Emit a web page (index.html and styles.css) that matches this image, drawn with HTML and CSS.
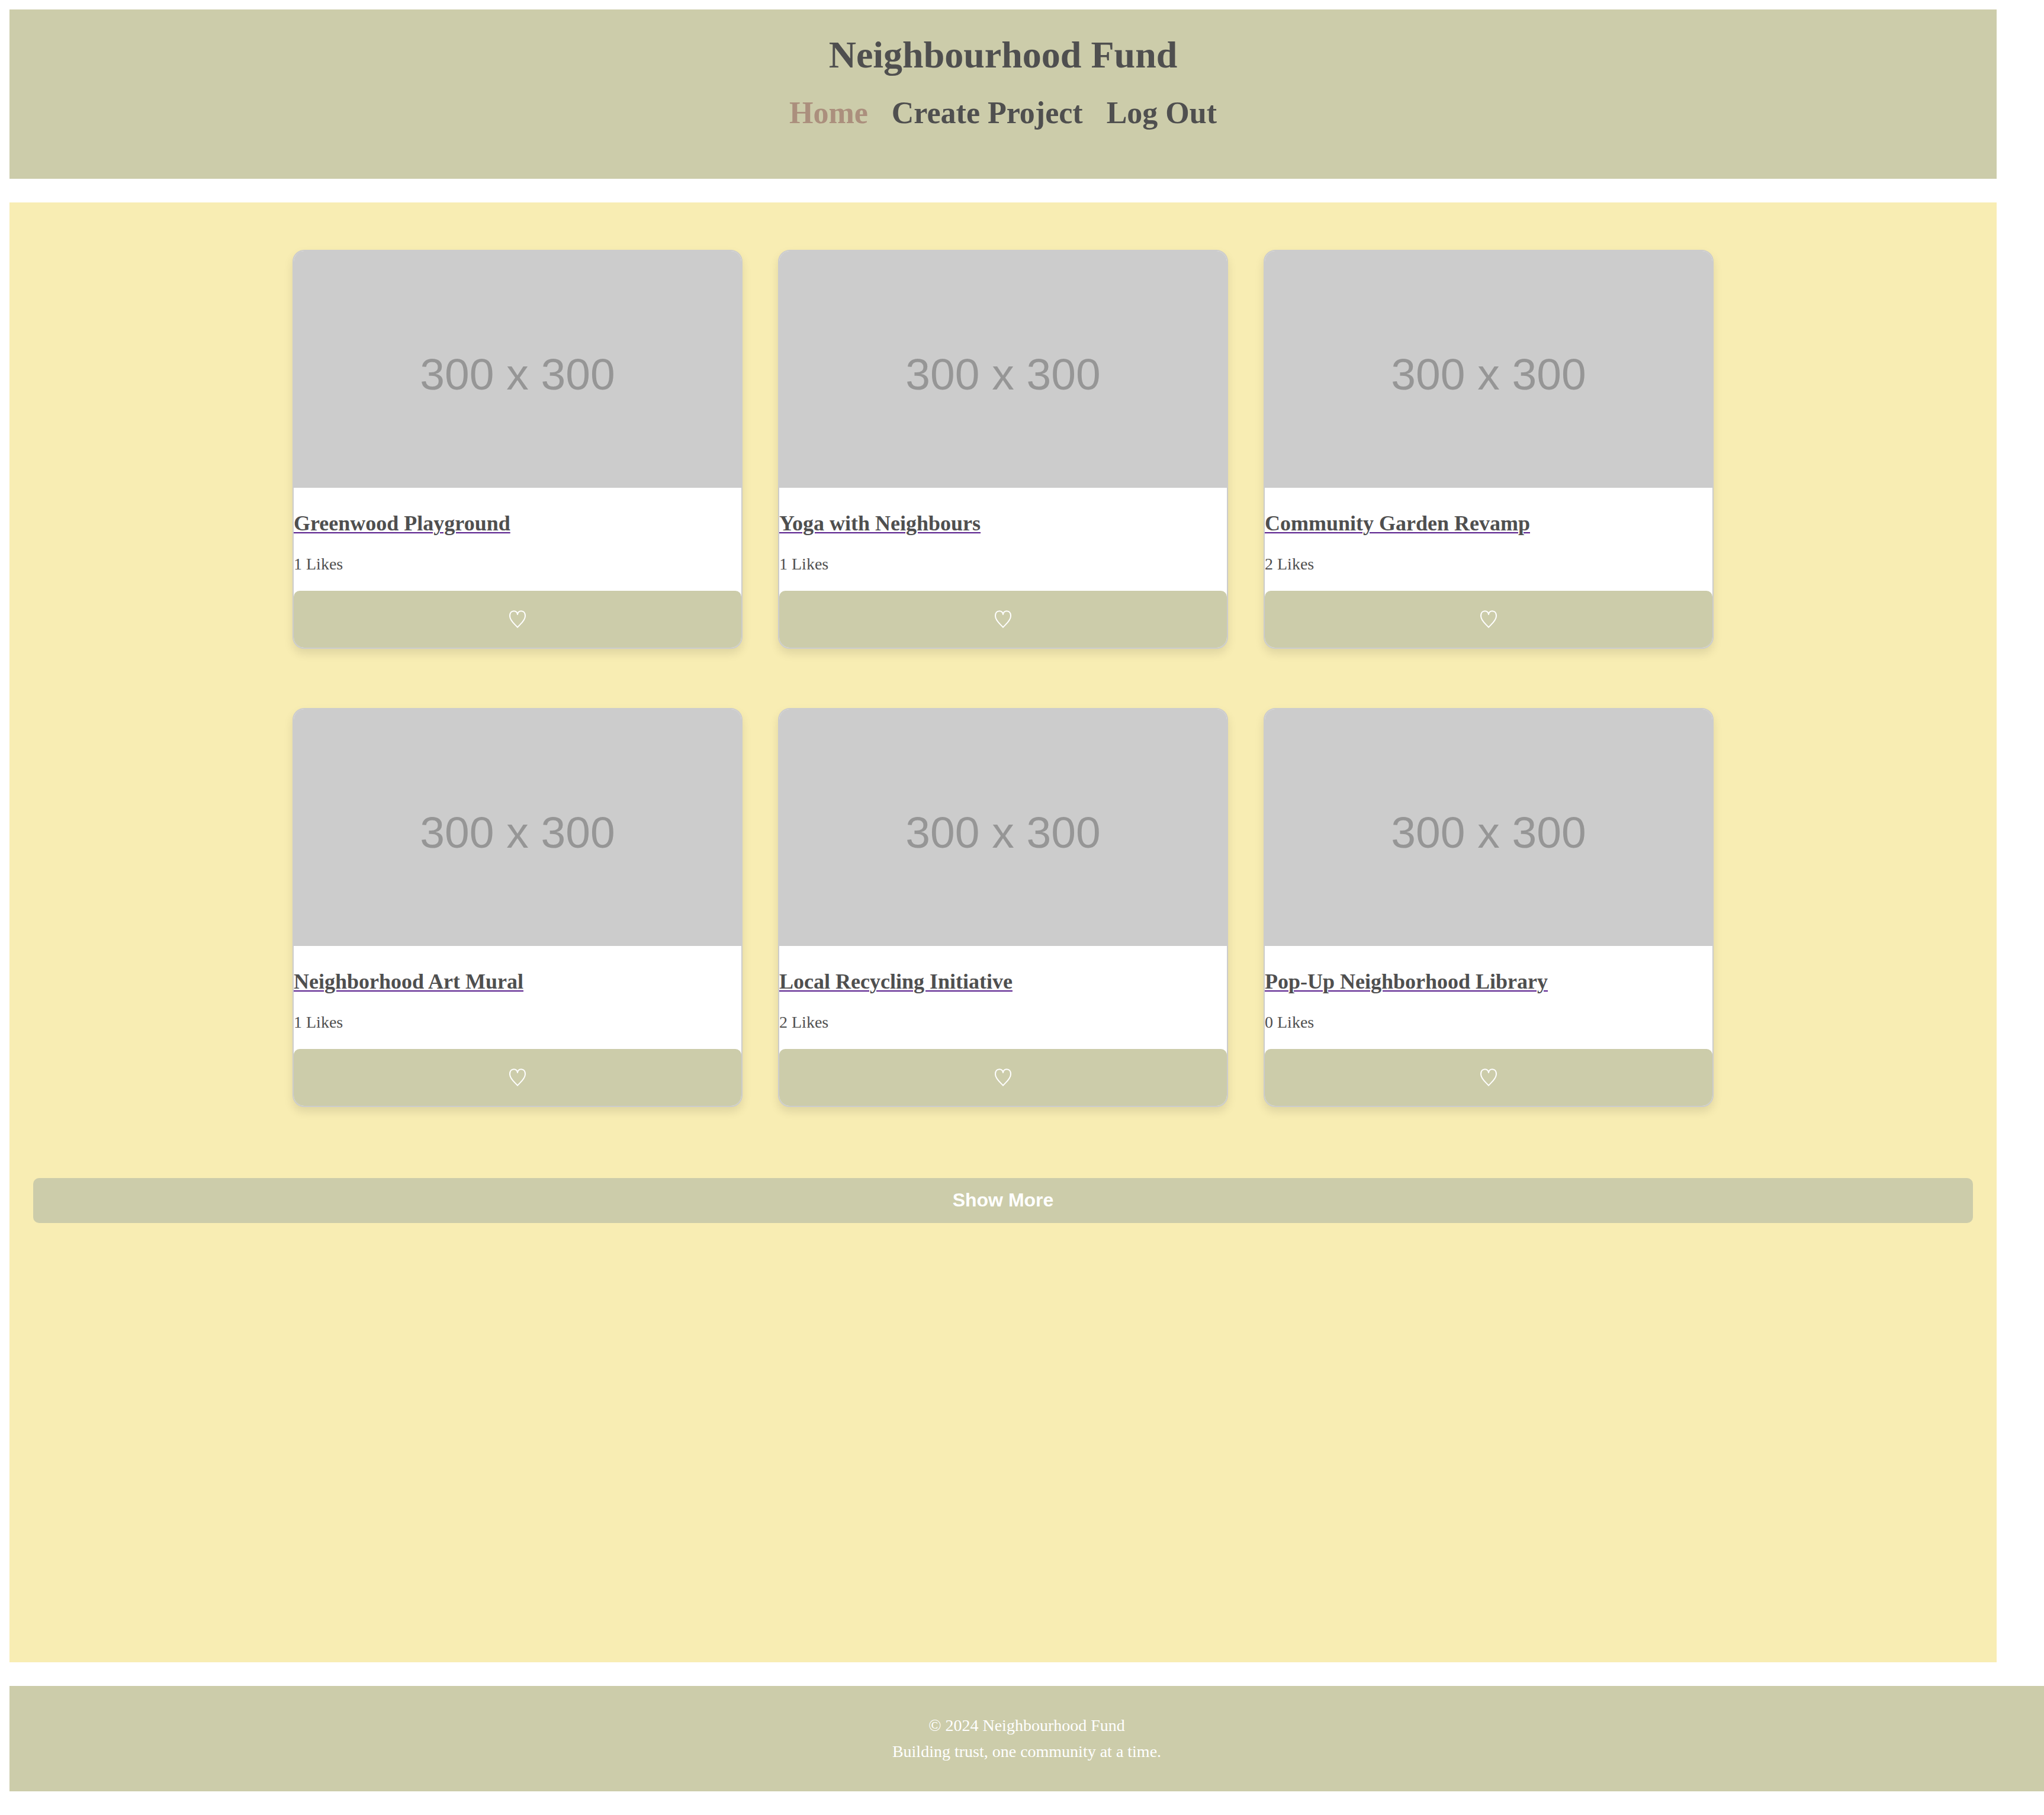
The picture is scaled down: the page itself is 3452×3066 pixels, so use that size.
FILE: index.html
```html
<!DOCTYPE html>
<html lang="en">
<head>
  <meta charset="utf-8">
  <meta name="viewport" content="width=device-width, initial-scale=1">
  <title>Neighbourhood Fund</title>
  <link rel="stylesheet" href="styles.css">
</head>
<body>
  <svg class="sprite" aria-hidden="true">
    <symbol id="heart" viewBox="0 0 28 30">
      <path d="M14 28.8C11 24.500 1 18 1 9.500C1 4.500 3.500 1.200 7.800 1.200C11 1.200 13.500 3 14 7C14.500 3 17 1.200 20.200 1.200C24.500 1.200 27 4.500 27 9.500C27 18 17 24.500 14 28.800Z" fill="none" stroke="currentColor" stroke-width="2" stroke-linejoin="round"/>
    </symbol>
  </svg>

  <header class="site-header">
    <h1 class="site-title">Neighbourhood Fund</h1>
    <nav class="site-nav">
      <a class="nav-link nav-link-active" href="#">Home</a>
      <a class="nav-link" href="#">Create Project</a>
      <a class="nav-link" href="#">Log Out</a>
    </nav>
  </header>

  <main class="content">
    <section class="projects">
      <article class="card">
        <div class="card-image">300 x 300</div>
        <a class="card-link" href="#"><h3 class="card-title">Greenwood Playground</h3></a>
        <p class="card-likes">1 Likes</p>
        <button class="like-button" type="button" aria-label="Like Greenwood Playground"><svg class="heart"><use href="#heart"/></svg></button>
      </article>
      <article class="card">
        <div class="card-image">300 x 300</div>
        <a class="card-link" href="#"><h3 class="card-title">Yoga with Neighbours</h3></a>
        <p class="card-likes">1 Likes</p>
        <button class="like-button" type="button" aria-label="Like Yoga with Neighbours"><svg class="heart"><use href="#heart"/></svg></button>
      </article>
      <article class="card">
        <div class="card-image">300 x 300</div>
        <a class="card-link" href="#"><h3 class="card-title">Community Garden Revamp</h3></a>
        <p class="card-likes">2 Likes</p>
        <button class="like-button" type="button" aria-label="Like Community Garden Revamp"><svg class="heart"><use href="#heart"/></svg></button>
      </article>
      <article class="card">
        <div class="card-image">300 x 300</div>
        <a class="card-link" href="#"><h3 class="card-title">Neighborhood Art Mural</h3></a>
        <p class="card-likes">1 Likes</p>
        <button class="like-button" type="button" aria-label="Like Neighborhood Art Mural"><svg class="heart"><use href="#heart"/></svg></button>
      </article>
      <article class="card">
        <div class="card-image">300 x 300</div>
        <a class="card-link" href="#"><h3 class="card-title">Local Recycling Initiative</h3></a>
        <p class="card-likes">2 Likes</p>
        <button class="like-button" type="button" aria-label="Like Local Recycling Initiative"><svg class="heart"><use href="#heart"/></svg></button>
      </article>
      <article class="card">
        <div class="card-image">300 x 300</div>
        <a class="card-link" href="#"><h3 class="card-title">Pop-Up Neighborhood Library</h3></a>
        <p class="card-likes">0 Likes</p>
        <button class="like-button" type="button" aria-label="Like Pop-Up Neighborhood Library"><svg class="heart"><use href="#heart"/></svg></button>
      </article>
    </section>
    <button class="show-more" type="button">Show More</button>
  </main>

  <footer class="site-footer">
    <p class="footer-line">© 2024 Neighbourhood Fund</p>
    <p class="footer-line">Building trust, one community at a time.</p>
  </footer>
</body>
</html>
```
FILE: styles.css
```css
* {
  box-sizing: border-box;
}

body {
  display: flex;
  flex-direction: column;
  gap: 40px;
  min-height: calc(100vh - 56px);
  margin: 16px 0 40px 16px;
  background: #fff;
  color: #4f4f4f;
  font-family: "Liberation Serif", "Times New Roman", serif;
  font-size: 28px;
}

.sprite {
  display: none;
}

.site-header {
  display: flex;
  flex-direction: column;
  align-items: center;
  gap: 27px;
  margin-right: 80px;
  padding: 40px 40px 77px;
  background: #ccccaa;
}

.site-title {
  margin: 0;
  font-size: 64px;
  line-height: 74px;
}

.site-nav {
  display: flex;
  gap: 40px;
  font-size: 52px;
  font-weight: bold;
  line-height: 68px;
}

.nav-link {
  color: inherit;
  text-decoration: none;
}

.nav-link-active {
  color: #ab8f7d;
}

.content {
  display: flex;
  flex: 1;
  flex-direction: column;
  gap: 120px;
  margin-right: 80px;
  padding: 80px 40px;
  background: #f8edb3;
}

.projects {
  display: grid;
  grid-template-columns: repeat(3, 1fr);
  gap: 100px 60px;
  width: 100%;
  max-width: 2400px;
  margin: 0 auto;
}

.card {
  display: flex;
  flex-direction: column;
  overflow: hidden;
  border: 2px solid #ccc;
  border-radius: 20px;
  background: #fff;
  box-shadow: 0 8px 16px rgba(0, 0, 0, 0.1);
}

.card-image {
  display: flex;
  align-items: center;
  justify-content: center;
  height: 400px;
  padding-top: 16px;
  background: #ccc;
  color: #969696;
  font-family: "Liberation Sans", Arial, sans-serif;
  font-size: 75px;
}

.card-link {
  margin-top: 38px;
  color: #551a8b;
  text-decoration-thickness: 2px;
  text-underline-offset: 3px;
}

.card-title {
  margin: 0;
  color: #4f4f4f;
  font-size: 36px;
  line-height: 44px;
}

.card-likes {
  margin: 31px 0 29px;
  line-height: 32px;
}

.like-button {
  display: flex;
  align-items: center;
  justify-content: center;
  height: 96px;
  border: 0;
  border-radius: 10px;
  background: #ccccaa;
  color: #fff;
}

.heart {
  width: 28px;
  height: 30px;
}

.show-more {
  height: 76px;
  padding: 0 0 2px;
  border: 0;
  border-radius: 10px;
  background: #ccccaa;
  color: #fff;
  font-family: "Liberation Sans", Arial, sans-serif;
  font-size: 32px;
  font-weight: bold;
}

/* The footer band runs on to the right edge of the window. */
.site-footer {
  padding: 45px 40px;
  background: #ccccaa;
  color: #fff;
  line-height: 44px;
  text-align: center;
}

.footer-line {
  margin: 0;
}
```
